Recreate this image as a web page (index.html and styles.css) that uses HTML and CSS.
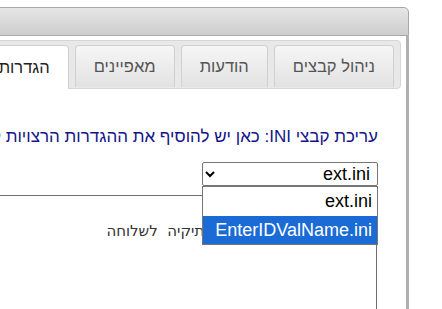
FILE: index.html
```html
<!DOCTYPE html>
<html lang="he" dir="rtl">
<head>
    <meta charset="UTF-8">
    <title>הגדרות</title>
    <link rel="stylesheet" href="styles.css">
</head>
<body>
    <div class="dialog">
        <div class="titlebar"></div>
        <div class="dialog-body">
            <div class="tabs">
                <ul class="tab-nav">
                    <li class="tab">ניהול קבצים</li>
                    <li class="tab">הודעות</li>
                    <li class="tab">מאפיינים</li>
                    <li class="tab active">הגדרות סינכרון</li>
                </ul>
                <div class="tab-panel">
                    <p class="intro">עריכת קבצי INI: כאן יש להוסיף את ההגדרות הרצויות לקובץ</p>
                    <div class="select-wrap">
                        <select class="ini-select">
                            <option>ext.ini</option>
                            <option>EnterIDValName.ini</option>
                        </select>
                        <!-- הרשימה הפתוחה -->
                        <div class="popup">
                            <div class="option">ext.ini</div>
                            <div class="option selected">EnterIDValName.ini</div>
                        </div>
                    </div>
                    <div class="editor">
                        <div class="editor-line">בתיקיה&nbsp; לשלוחה</div>
                    </div>
                </div>
            </div>
        </div>
    </div>
</body>
</html>
```

FILE: styles.css
```css
html, body {
    margin: 0;
    height: 100%;
    overflow: hidden;
    background: #fff;
}
body {
    font-family: 'Liberation Sans', Arial, sans-serif;
}
.dialog {
    margin: 7px 33px 0 0;
    width: 509px;
    flex-shrink: 0;
}
.titlebar {
    height: 27px;
    border: 1px solid #a9a9a9;
    border-radius: 5px 5px 0 0;
    background: linear-gradient(#e6e6e6, #cdcdcd);
}
.dialog-body {
    border-right: 3px solid #b0b0b0;
    padding: 4px 5px 0 0;
    height: 300px;
}
.tab-nav {
    list-style: none;
    margin: 0;
    padding: 4px 6px 0 0;
    display: flex;
    gap: 6px;
    height: 43px;
    border: 1px solid #d6d6d6;
    border-radius: 4px;
    background: #e8e8e8;
}
.tab {
    flex-shrink: 0;
    height: 41px;
    padding: 0 18px;
    display: flex;
    align-items: center;
    font-size: 16.5px;
    color: #555;
    border: 1px solid #d0d0d0;
    border-bottom: none;
    border-radius: 4px 4px 0 0;
    background: linear-gradient(#f6f6f6, #e2e2e2);
}
.tab.active {
    background: #fff;
    color: #222;
    height: 43px;
}
.tab-panel {
    padding: 0 23px 0 0;
}
.intro {
    margin: 38px 0 0;
    font-size: 17px;
    color: #14148a;
    white-space: nowrap;
}
.select-wrap {
    margin-top: 15px;
    width: 176px;
    position: relative;
    z-index: 2;
}
.ini-select {
    display: block;
    width: 176px;
    height: 24px;
    font-family: 'Liberation Sans', Arial, sans-serif;
    font-size: 18px;
    border: 1px solid #767676;
    border-radius: 2px;
    background: #fff;
    color: #000;
    padding: 0 3px;
}
.popup {
    position: absolute;
    top: 24px;
    right: 0;
    width: 176px;
    box-sizing: border-box;
    border: 1px solid #767676;
    background: #fff;
}
.option {
    height: 29px;
    line-height: 29px;
    padding: 0 5px;
    font-size: 18px;
    color: #000;
}
.option.selected {
    height: 28px;
    line-height: 28px;
    background: #1a6bd6;
    color: #fff;
}
.editor {
    margin: 9px 1px 0 0;
    border: 1px solid #6e6e6e;
    height: 200px;
    padding: 26px 0 0 0;
}
.editor-line {
    font-family: 'DejaVu Sans', sans-serif;
    font-size: 15px;
    color: #333;
    padding-right: 163px;
}
```
